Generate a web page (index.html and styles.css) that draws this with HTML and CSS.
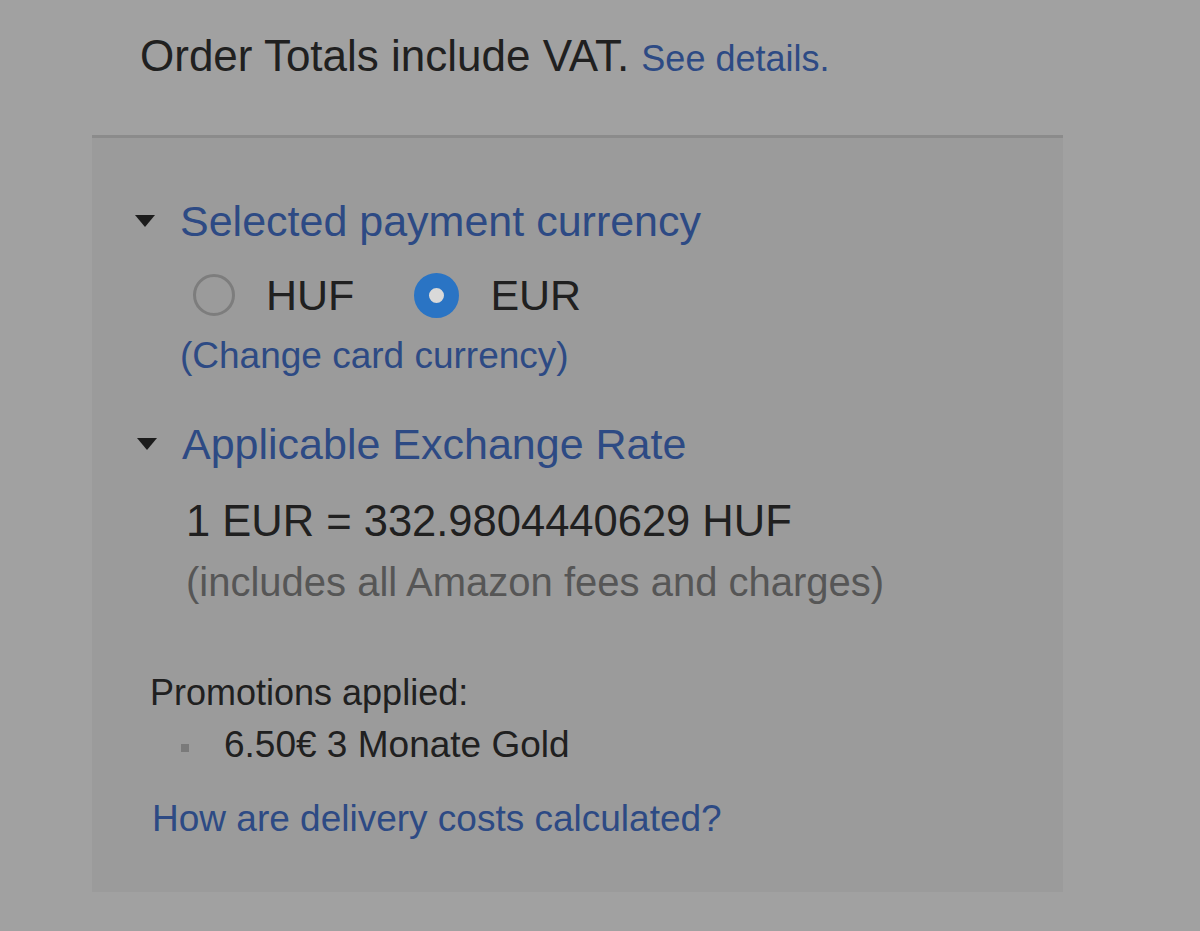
FILE: index.html
```html
<!DOCTYPE html>
<html lang="en">
<head>
  <meta charset="UTF-8">
  <meta name="viewport" content="width=device-width, initial-scale=1.0">
  <title>Order Totals</title>
  <link rel="stylesheet" href="styles.css">
</head>
<body>

  <p class="vat-note">Order Totals include VAT. <a href="#" class="small-link">See details.</a></p>

  <div class="summary-box">
    <div class="section">
      <div class="section-title"><span class="caret"></span><a href="#">Selected payment currency</a></div>
      <div class="section-body">
        <div class="radios">
          <label class="radio"><span class="dot"></span>HUF</label>
          <label class="radio"><span class="dot checked"></span>EUR</label>
        </div>
        <a href="#" class="change-link">(Change card currency)</a>
      </div>
    </div>

    <div class="section second">
      <div class="section-title"><span class="caret"></span><a href="#">Applicable Exchange Rate</a></div>
      <div class="section-body">
        <div class="rate">1 EUR = 332.9804440629 HUF</div>
        <div class="fees">(includes all Amazon fees and charges)</div>
      </div>
    </div>

    <div class="promos">
      <div class="promos-title">Promotions applied:</div>
      <ul>
        <li>6.50€ 3 Monate Gold</li>
      </ul>
    </div>

    <a href="#" class="delivery-link">How are delivery costs calculated?</a>
  </div>

</body>
</html>
```

FILE: styles.css
```css
body {
  font-family: 'Liberation Sans', Arial, sans-serif;
  background-color: #a1a1a1;
  color: #202020;
  margin: 0;
  height: 931px;
  overflow: hidden;
}

a {
  color: #2d4a84;
  text-decoration: none;
}

.vat-note {
  margin: 0;
  padding: 31px 0 0 140px;
  font-size: 44px;
  line-height: 50px;
}

.small-link {
  font-size: 36px;
}

.summary-box {
  margin: 51px 0 0 92px;
  width: 971px;
  box-sizing: border-box;
  background-color: #9b9b9b;
  border-top: 3px solid #8b8b8b;
  padding: 57px 0 51px 43px;
}

.section-title {
  display: flex;
  align-items: center;
  font-size: 43px;
  line-height: 52px;
}

.caret {
  width: 0;
  height: 0;
  border-left: 10px solid transparent;
  border-right: 10px solid transparent;
  border-top: 12px solid #1c1c1c;
  margin-right: 25px;
}

.section-body {
  padding-left: 45px;
}

.radios {
  display: flex;
  align-items: center;
  margin-top: 22px;
  margin-left: 13px;
  font-size: 43px;
  line-height: 52px;
}

.radio {
  display: flex;
  align-items: center;
  margin-right: 60px;
}

.dot {
  width: 42px;
  height: 42px;
  box-sizing: border-box;
  border: 3px solid #7d7d7d;
  border-radius: 50%;
  margin-right: 31px;
}

.dot.checked {
  border: 15px solid #2a74c4;
  background-color: #d9d9d9;
  width: 45px;
  height: 45px;
}

.change-link {
  display: block;
  margin-top: 13px;
  font-size: 37px;
  line-height: 44px;
}

.second {
  margin-top: 40px;
}

.second .section-title {
  padding-left: 2px;
}

.rate {
  margin-top: 25px;
  padding-left: 6px;
  font-size: 43.5px;
  line-height: 52px;
}

.fees {
  margin-top: 11px;
  padding-left: 6px;
  font-size: 40px;
  line-height: 48px;
  color: #565656;
}

.promos {
  margin-top: 65px;
  padding-left: 15px;
}

.promos-title {
  font-size: 36px;
  line-height: 44px;
}

.promos ul {
  list-style: none;
  margin: 8px 0 0;
  padding: 0;
}

.promos li {
  display: flex;
  align-items: center;
  font-size: 37px;
  line-height: 44px;
}

.promos li::before {
  content: "";
  width: 8px;
  height: 8px;
  background-color: #7a7a7a;
  margin: 6px 35px 0 31px;
}

.delivery-link {
  display: block;
  margin-top: 30px;
  padding-left: 17px;
  font-size: 37px;
  line-height: 44px;
}
```
